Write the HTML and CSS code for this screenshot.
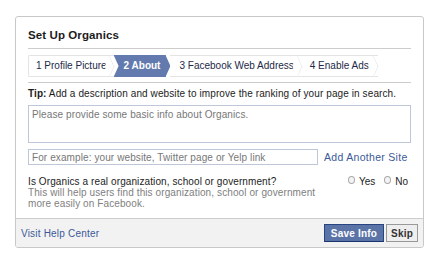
FILE: index.html
```html
<!DOCTYPE html>
<html lang="en">
<head>
    <meta charset="UTF-8">
    <title>Set Up Organics</title>
    <link rel="stylesheet" href="styles.css">
</head>
<body>
    <div class="dialog">
        <div class="content">
            <h2 class="title">Set Up Organics</h2>
            <ul class="steps">
                <li class="step">1 Profile Picture</li>
                <li class="step active">2 About</li>
                <li class="step">3 Facebook Web Address</li>
                <li class="step">4 Enable Ads</li>
            </ul>
            <p class="tip"><b>Tip:</b> Add a description and website to improve the ranking of your page in search.</p>
            <textarea class="about" placeholder="Please provide some basic info about Organics."></textarea>
            <div class="site-row">
                <input class="site" type="text" placeholder="For example: your website, Twitter page or Yelp link">
                <a class="link" href="#">Add Another Site</a>
            </div>
            <div class="question">
                <div class="question-text">
                    <div>Is Organics a real organization, school or government?</div>
                    <div class="muted">This will help users find this organization, school or government more easily on Facebook.</div>
                </div>
                <div class="choices">
                    <label><span class="radio"></span>Yes</label>
                    <label><span class="radio"></span>No</label>
                </div>
            </div>
        </div>
        <div class="footer">
            <a class="link" href="#">Visit Help Center</a>
            <div class="actions">
                <button class="btn primary">Save Info</button>
                <button class="btn">Skip</button>
            </div>
        </div>
    </div>
</body>
</html>
```

FILE: styles.css
```css
body {
    margin: 0;
    background: #fff;
    font-family: "Liberation Sans", Arial, sans-serif;
    font-size: 10px;
    color: #333;
}
.dialog {
    margin: 16px 0 0 15px;
    width: 407px;
    border: 1px solid #c8c8c8;
    border-radius: 3px;
    overflow: hidden;
}
.content {
    padding: 0 12px 9px;
}
.title {
    margin: 0;
    padding: 12px 0 7px;
    font-size: 11.5px;
    letter-spacing: 0.1px;
    color: #1c1c1c;
    border-bottom: 1px solid #ccc;
}
.steps {
    list-style: none;
    margin: 6px 0 0;
    padding: 0 0 5px;
    display: flex;
    white-space: nowrap;
    border-bottom: 1px solid #ccc;
}
.step {
    position: relative;
    height: 20px;
    line-height: 20px;
    padding: 0 8px 0 8px;
    color: #1c2a47;
    border-top: 1px solid #e4e4e4;
    border-bottom: 1px solid #e4e4e4;
}
.step:first-child {
    padding-left: 7px;
    padding-right: 7px;
    border-left: 1px solid #e4e4e4;
    border-radius: 2px 0 0 2px;
}
.step::after {
    content: "";
    position: absolute;
    right: -3px;
    top: 3px;
    width: 14px;
    height: 14px;
    border-top: 1px solid #e4e4e4;
    border-right: 1px solid #e4e4e4;
    transform: scaleX(0.45) rotate(45deg);
    background: #fff;
    z-index: 1;
}
.step.active {
    padding: 0 10px;
    background: #627aad;
    color: #fff;
    font-weight: bold;
    border-color: #627aad;
    clip-path: polygon(0 0, calc(100% - 5px) 0, 100% 50%, calc(100% - 5px) 100%, 0 100%, 5px 50%);
    z-index: 2;
}
.step.active::after {
    display: none;
}
.step.active + .step {
    padding-left: 9px;
}
.step:last-child {
    padding-right: 9px;
}
.tip {
    margin: 5px 0 6px;
    white-space: nowrap;
    letter-spacing: 0.1px;
    color: #1c1c1c;
}
.about {
    display: block;
    box-sizing: border-box;
    width: 100%;
    height: 38px;
    margin: 0;
    padding: 3px;
    border: 1px solid #bdc7d8;
    font: inherit;
    letter-spacing: 0.1px;
    resize: none;
}
.about::placeholder,
.site::placeholder {
    color: #777;
}
.site-row {
    display: flex;
    align-items: center;
    margin-top: 6px;
}
.site {
    box-sizing: border-box;
    width: 290px;
    height: 16px;
    margin: 0 6px 0 0;
    padding: 0 3px;
    border: 1px solid #bdc7d8;
    font: inherit;
    letter-spacing: 0.1px;
}
.link {
    color: #3b5998;
    text-decoration: none;
}
.site-row .link {
    font-size: 10.5px;
    letter-spacing: 0.3px;
}
.question {
    display: flex;
    justify-content: space-between;
    margin-top: 11px;
    color: #1c1c1c;
}
.question-text {
    width: 300px;
    line-height: 11px;
    letter-spacing: 0.1px;
}
.muted {
    color: #808080;
}
.choices {
    display: flex;
    gap: 9px;
    padding-right: 3px;
}
.choices label {
    display: flex;
    align-items: center;
    height: 10px;
}
.radio {
    width: 5px;
    height: 6px;
    margin-right: 4px;
    margin-top: -2px;
    border: 1px solid #aaa;
    border-radius: 50%;
    background: #f4f4f4;
}
.footer {
    display: flex;
    justify-content: space-between;
    align-items: center;
    height: 28px;
    padding: 0 5px;
    background: #f2f2f2;
    border-top: 1px solid #ccc;
}
.footer > .link {
    letter-spacing: 0.2px;
}
.actions {
    display: flex;
    gap: 2px;
}
.btn {
    height: 18px;
    padding: 0 4px;
    border: 1px solid #999;
    background: #eee;
    color: #333;
    font: bold 10px "Liberation Sans", Arial, sans-serif;
    letter-spacing: 0.2px;
}
.btn.primary {
    padding: 0 6px;
    background: #5b74a8;
    border-color: #29447e #29447e #1a356e;
    color: #fff;
}
```
